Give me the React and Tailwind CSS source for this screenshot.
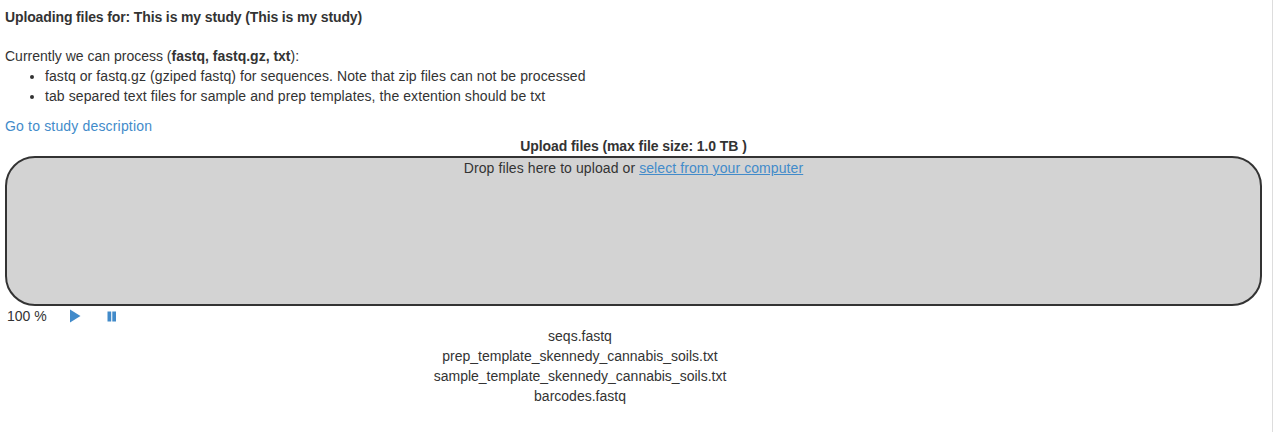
export default function App() {
  return (
    <div className="w-[1273px] h-[432px] overflow-hidden bg-white text-[14px] leading-[20px] text-[#333333] font-['Liberation_Sans',sans-serif] border-r border-[#dddddd] pl-[5px] pr-[10px] pt-[7px]">
      <b className="block tracking-[-0.125px]">Uploading files for: This is my study (This is my study)</b>
      <div className="mt-[19px]">Currently we can process (<b>fastq, fastq.gz, txt</b>):</div>
      <ul className="list-disc pl-[40px] tracking-[0.085px]">
        <li>fastq or fastq.gz (gziped fastq) for sequences. Note that zip files can not be processed</li>
        <li>tab separed text files for sample and prep templates, the extention should be txt</li>
      </ul>
      <a className="block mt-[10px] text-[#428bca] tracking-[0.17px]">Go to study description</a>
      <div className="text-center font-bold tracking-[-0.08px]">Upload files (max file size: 1.0 TB )</div>
      <div className="h-[150px] rounded-[30px] border-2 border-[#333333] bg-[#d3d3d3] text-center tracking-[0.09px]">
        Drop files here to upload or <a className="text-[#428bca] underline">select from your computer</a>
      </div>
      <div className="flex items-center h-[20px] pl-[2px]">
        <span className="w-[63px]">100 %</span>
        <svg width="11" height="14" viewBox="0 0 11 14" className="fill-[#428bca]"><path d="M0 0.5 L10.5 7 L0 13.5 Z" /></svg>
        <svg width="10" height="11" viewBox="0 0 10 11" className="ml-[26px] fill-[#428bca]"><path d="M0.5 0.5h3.7v10H0.5zM5.3 0.5h3.7v10H5.3z" /></svg>
      </div>
      <div className="w-[1150px] text-center">
        <div>seqs.fastq</div>
        <div>prep_template_skennedy_cannabis_soils.txt</div>
        <div>sample_template_skennedy_cannabis_soils.txt</div>
        <div>barcodes.fastq</div>
      </div>
    </div>
  );
}
